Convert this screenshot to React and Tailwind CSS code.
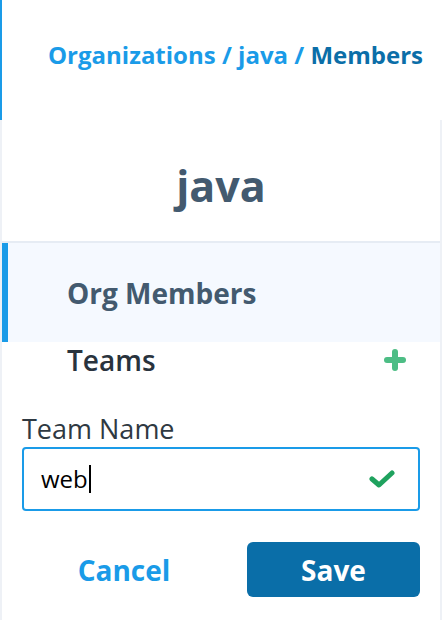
import React from 'react'

function PlusIcon() {
  return (
    <svg width="22" height="22" viewBox="0 0 22 22" fill="none" stroke="#4dbd85" strokeWidth="6" strokeLinecap="round">
      <line x1="11" y1="3" x2="11" y2="19" />
      <line x1="3" y1="11" x2="19" y2="11" />
    </svg>
  )
}

function CheckIcon() {
  return (
    <svg width="26" height="20" viewBox="0 0 26 20" fill="none" stroke="#1fa25e" strokeWidth="5" strokeLinecap="round" strokeLinejoin="round">
      <polyline points="3,10 10,16 23,4" />
    </svg>
  )
}

export default function App() {
  return (
    <div className="w-[442px] h-[620px] bg-white overflow-hidden" style={{ fontFamily: '"Open Sans", sans-serif' }}>
      {/* breadcrumb header */}
      <div className="h-[120px] border-l-2 border-[#1a9be8] flex items-center justify-end pr-[19px] pb-[10px]">
        <div className="text-[24px] font-bold">
          <span className="text-[#1a9be8]">Organizations / java / </span>
          <span className="text-[#0b6ea8]">Members</span>
        </div>
      </div>

      <div className="bg-[#eef1f6] px-[2px] h-[500px]">
        <div className="bg-white h-full flex flex-col">
          <div className="h-[121px] flex items-center justify-center pt-[12px]">
            <h1 className="text-[43px] font-bold text-[#435a6f]">java</h1>
          </div>

          <div className="border-t-2 border-[#e6ecf4]">
            <div className="h-[99px] bg-[#f5f9ff] border-l-[6px] border-[#1a9be8] flex items-center pl-[59px]">
              <span className="text-[28px] font-bold text-[#435a6f]">Org Members</span>
            </div>
            <div className="h-[36px] flex items-center justify-between pl-[65px] pr-[34px]">
              <span className="text-[28px] font-semibold text-[#29333d]">Teams</span>
              <PlusIcon />
            </div>
          </div>

          <div className="px-[20px] pt-[33px]">
            <label className="block text-[27px] text-[#2f3942] leading-[36px]">Team Name</label>
            <div className="h-[64px] border-2 border-[#1a9be8] rounded-[4px] flex items-center justify-between pl-[17px] pr-[23px]">
              <span className="text-[24px] text-black flex items-center">
                web<span className="inline-block w-[2px] h-[28px] bg-black ml-[1px]" />
              </span>
              <CheckIcon />
            </div>

            <div className="mt-[31px] flex items-center justify-between">
              <button className="w-[204px] h-[55px] text-[28px] font-bold text-[#1a9be8]">Cancel</button>
              <button className="w-[173px] h-[55px] rounded-[6px] bg-[#0a6ea8] text-[28px] font-bold text-white">Save</button>
            </div>
          </div>
        </div>
      </div>
    </div>
  )
}
